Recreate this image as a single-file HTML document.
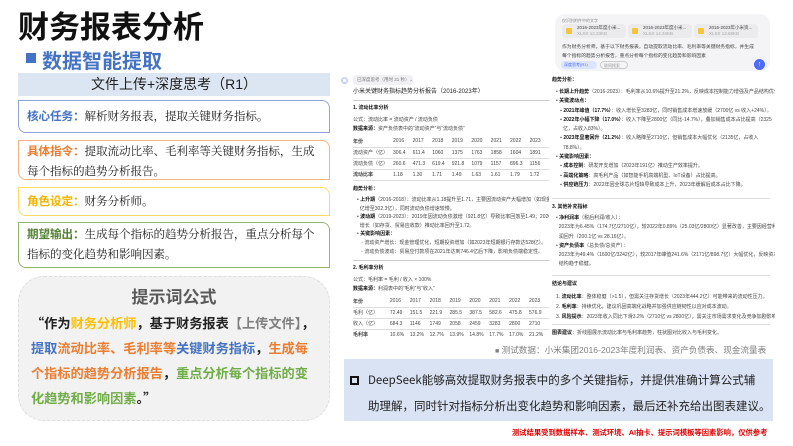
<!DOCTYPE html>
<html><head><meta charset="utf-8"><style>
*{margin:0;padding:0;box-sizing:border-box}
body{width:793px;height:446px;overflow:hidden;background:#fff;font-family:"Liberation Sans","Noto Sans CJK SC",sans-serif;position:relative}
.a{position:absolute}
.box{position:absolute;left:18px;width:312px;border:1.5px solid;border-radius:0 8px 0 8px;font-size:11.6px;line-height:20px;padding:3px 8px;color:#222;font-family:"Noto Serif CJK SC","Noto Sans CJK SC",serif;letter-spacing:-0.1px;white-space:nowrap}
.box b{font-family:"Noto Sans CJK SC",sans-serif}
.s{font-size:5px;color:#444;line-height:9px;white-space:nowrap}
.s b{color:#111}
table.t{border-collapse:collapse;font-size:5px;color:#444;white-space:nowrap}
table.t td{padding:0 5px 0 0;height:11px;border-bottom:0.5px solid #ddd;width:20px}
table.t td:first-child{width:38px}
.clip{position:absolute;overflow:hidden}
</style></head><body>
<div class="a" style="left:18px;top:2px;font-size:31px;font-weight:bold;color:#111;font-family:'Noto Sans CJK SC',sans-serif">财务报表分析</div>
<div class="a" style="left:26px;top:53px;width:10px;height:10px;background:#4472c4"></div>
<div class="a" style="left:42px;top:45px;font-size:20px;font-weight:bold;color:#4472c4;font-family:'Noto Sans CJK SC',sans-serif">数据智能提取</div>
<div class="a" style="left:18px;top:73px;width:312px;height:23px;background:#dce6f2;text-align:center;font-size:14px;line-height:23px;color:#222">文件上传+深度思考（R1）</div>
<div class="box" style="top:100px;height:33px;border-color:#8fa3d8;padding-top:5px"><b style="color:#4472c4">核心任务：</b>解析财务报表，提取关键财务指标。</div>
<div class="box" style="top:140px;height:40px;border-color:#f4b183;padding-top:0px"><b style="color:#ed7d31">具体指令：</b>提取流动比率、毛利率等关键财务指标，生成<br>每个指标的趋势分析报告。</div>
<div class="box" style="top:187px;height:29px;border-color:#ffd966;padding-top:3px"><b style="color:#f0b400">角色设定：</b>财务分析师。</div>
<div class="box" style="top:222px;height:46px;border-color:#8fb56a;padding-top:1px"><b style="color:#548235">期望输出：</b>生成每个指标的趋势分析报告，重点分析每个<br>指标的变化趋势和影响因素。</div>
<div class="a" style="left:18px;top:276px;width:312px;height:145px;background:#f2f2f2;border:1px dashed #ddd;border-radius:26px"></div>
<div class="a" style="left:18px;top:283px;width:312px;text-align:center;font-size:17px;font-weight:bold;color:#595959;font-family:'Noto Sans CJK SC',sans-serif">提示词公式</div>
<div class="a" style="left:31px;top:310px;width:300px;font-size:13.2px;line-height:25px;font-weight:bold;font-family:'Noto Sans CJK SC',sans-serif;color:#222;white-space:nowrap">“作为<span style="color:#ffc000">财务分析师</span>，基于财务报表<span style="color:#7f7f7f">【上传文件】</span>，<br><span style="color:#4472c4">提取</span><span style="color:#ed7d31">流动比率、毛利率等</span><span style="color:#4472c4">关键财务指标</span>，<span style="color:#ed7d31">生成每<br>个指标的趋势分析报告</span>，<span style="color:#70ad47">重点分析每个指标的变<br>化趋势和影响因素</span>。”</div>

<!-- left screenshot -->
<div class="clip" style="left:337px;top:72px;width:212px;height:268px;background:#fff">
<div class="a" style="left:4px;top:4px;font-size:7px;color:#4d6bfe;font-weight:bold">◎</div>
<div class="a" style="left:16px;top:3px;width:60px;height:10px;background:#f1f1f3;border-radius:3px;font-size:4.5px;color:#777;line-height:10px;padding-left:4px;white-space:nowrap">已深度思考（用时 21 秒）⌄</div>
<div class="a s" style="left:16px;top:16px;font-size:6px;color:#222">小米关键财务指标趋势分析报告（2016-2023年）</div>
<div class="a" style="left:16px;top:28px;width:196px;border-top:1px solid #ccc"></div>
<div class="a s" style="left:16px;top:32px"><b>1. 流动比率分析</b></div>
<div class="a s" style="left:16px;top:44px">公式：流动比率 = 流动资产 / 流动负债<br><b>数据来源：</b>资产负债表中的“流动资产”与“流动负债”</div>
<table class="t a" style="left:16px;top:64px"><tr><td><b>年份</b></td><td>2016</td><td>2017</td><td>2018</td><td>2019</td><td>2020</td><td>2021</td><td>2022</td><td>2023</td></tr>
<tr><td>流动资产（亿）</td><td>306.4</td><td>611.4</td><td>1060</td><td>1375</td><td>1763</td><td>1858</td><td>1604</td><td>1891</td></tr>
<tr><td>流动负债（亿）</td><td>260.6</td><td>471.3</td><td>619.4</td><td>921.8</td><td>1079</td><td>1157</td><td>896.3</td><td>1156</td></tr>
<tr><td><b>流动比率</b></td><td>1.18</td><td>1.30</td><td>1.71</td><td>1.49</td><td>1.63</td><td>1.61</td><td>1.79</td><td>1.72</td></tr></table>
<div class="a s" style="left:16px;top:113px"><b>趋势分析：</b></div>
<div class="a s" style="left:20px;top:124px;line-height:8.6px">• <b>上升期</b>（2016-2018）：流动比率从1.18提升至1.71，主要因流动资产大幅增加（如现金及等价物从<br>&nbsp;&nbsp;亿增至302.3亿），同时流动负债增速较慢。<br>• <b>波动期</b>（2019-2023）：2019年因流动负债激增（921.8亿）导致比率回落至1.49；2020年后流动<br>&nbsp;&nbsp;增长（如存货、贸易应收款）推动比率回升至1.72。<br>• <b>关键影响因素：</b><br>&nbsp;&nbsp;&nbsp;◦ 流动资产增长：现金管理优化，短期投资增加（如2023年短期银行存款达528亿）。<br>&nbsp;&nbsp;&nbsp;◦ 流动负债波动：贸易应付款项在2021年达到746.4亿后下降，影响负债端稳定性。</div>
<div class="a" style="left:16px;top:188px;width:196px;border-top:1px solid #ccc"></div>
<div class="a s" style="left:16px;top:192px"><b>2. 毛利率分析</b></div>
<div class="a s" style="left:16px;top:204px">公式：毛利率 = 毛利 / 收入 × 100%<br><b>数据来源：</b>利润表中的“毛利”与“收入”</div>
<table class="t a" style="left:16px;top:224px"><tr><td><b>年份</b></td><td>2016</td><td>2017</td><td>2018</td><td>2019</td><td>2020</td><td>2021</td><td>2022</td><td>2023</td></tr>
<tr><td>毛利（亿）</td><td>72.49</td><td>151.5</td><td>221.9</td><td>285.5</td><td>387.5</td><td>582.6</td><td>475.8</td><td>576.9</td></tr>
<tr><td>收入（亿）</td><td>684.3</td><td>1146</td><td>1749</td><td>2058</td><td>2459</td><td>3283</td><td>2800</td><td>2710</td></tr>
<tr><td><b>毛利率</b></td><td>10.6%</td><td>13.2%</td><td>12.7%</td><td>13.9%</td><td>14.8%</td><td>17.7%</td><td>17.0%</td><td>21.2%</td></tr></table>
</div>

<!-- right chat box -->
<div class="a" style="left:555px;top:14px;width:215px;height:57px;background:#f4f4f6;border-radius:10px"></div>
<div class="a s" style="left:562px;top:16px;font-size:4px;color:#888">仅识别附件中的文字</div>
<div class="a" style="left:562px;top:24px;width:64px;height:14px;background:#ebebee;border-radius:4px"></div>
<div class="a" style="left:628px;top:24px;width:64px;height:14px;background:#ebebee;border-radius:4px"></div>
<div class="a" style="left:694px;top:24px;width:64px;height:14px;background:#ebebee;border-radius:4px"></div>
<div class="a" style="left:566px;top:28px;width:6px;height:6px;background:#f5c542;border-radius:1px"></div>
<div class="a" style="left:632px;top:28px;width:6px;height:6px;background:#f5c542;border-radius:1px"></div>
<div class="a" style="left:698px;top:28px;width:6px;height:6px;background:#f5c542;border-radius:1px"></div>
<div class="a s" style="left:577px;top:25px;font-size:4.5px;line-height:6px">2016-2023年度小米...<br><span style="color:#aaa">XLSX 12.23KB</span></div>
<div class="a s" style="left:643px;top:25px;font-size:4.5px;line-height:6px">2016-2023年度小米...<br><span style="color:#aaa">XLSX 14.34KB</span></div>
<div class="a s" style="left:709px;top:25px;font-size:4.5px;line-height:6px">2016-2023年小米资...<br><span style="color:#aaa">XLSX 13.68KB</span></div>
<div class="a s" style="left:562px;top:43px;font-size:4.8px;line-height:9px">作为财务分析师，基于以下财务报表，自动提取流动比率、毛利率等关键财务指标，并生成<br>每个指标的趋势分析报告，重点分析每个指标的变化趋势和影响因素</div>
<div class="a" style="left:561px;top:61px;width:36px;height:8px;background:#dbe6fe;border-radius:4px;font-size:4px;color:#4d6bfe;line-height:8px;padding-left:3px;white-space:nowrap">深度思考(R1)</div>
<div class="a" style="left:600px;top:61px;width:28px;height:8px;border:0.5px solid #ccc;border-radius:4px;font-size:4px;color:#999;line-height:7px;padding-left:3px;white-space:nowrap">联网搜索</div>
<div class="a" style="left:754px;top:59px;width:11px;height:11px;background:#4d6bfe;border-radius:50%;color:#fff;font-size:7px;text-align:center;line-height:11px">↑</div>

<div class="clip" style="left:550px;top:72px;width:225px;height:268px">
<div class="a s" style="left:2px;top:4px"><b>趋势分析：</b></div>
<div class="a s" style="left:6px;top:16px;line-height:9.3px">• <b>长期上升趋势</b>（2016-2023）：毛利率从10.6%提升至21.2%，反映成本控制能力增强及产品结构优化。<br>• <b>关键波动点：</b><br>&nbsp;&nbsp;&nbsp;▪ <b>2021年峰值（17.7%）</b>：收入增长至3283亿，同时销售成本增速放缓（2700亿 vs 收入+24%）。<br>&nbsp;&nbsp;&nbsp;▪ <b>2022年小幅下降（17.0%）</b>：收入下降至2800亿（同比-14.7%），叠加销售成本占比提高（2325<br>&nbsp;&nbsp;&nbsp;&nbsp;&nbsp;亿，占收入83%）。<br>&nbsp;&nbsp;&nbsp;▪ <b>2023年显著回升（21.2%）</b>：收入略降至2710亿，但销售成本大幅优化（2135亿，占收入<br>&nbsp;&nbsp;&nbsp;&nbsp;&nbsp;78.8%）。<br>• <b>关键影响因素：</b><br>&nbsp;&nbsp;&nbsp;▪ <b>成本控制</b>：研发开支增加（2023年191亿）推动生产效率提升。<br>&nbsp;&nbsp;&nbsp;▪ <b>高端化策略</b>：高毛利产品（如智能手机高端机型、IoT设备）占比提高。<br>&nbsp;&nbsp;&nbsp;▪ <b>供应链压力</b>：2022年因全球芯片短缺导致成本上升，2023年缓解后成本占比下降。</div>
<div class="a" style="left:2px;top:126px;width:218px;border-top:1px solid #ddd"></div>
<div class="a s" style="left:2px;top:131px"><b>3. 其他补充指标</b></div>
<div class="a s" style="left:6px;top:142px;line-height:9.3px">• <b>净利润率</b>（税后利润/收入）：<br>&nbsp;&nbsp;2023年为6.45%（174.7亿/2710亿），较2022年0.89%（25.03亿/2800亿）显著改善，主要因经营利<br>&nbsp;&nbsp;润回升（200.1亿 vs 28.16亿）。<br>• <b>资产负债率</b>（总负债/总资产）：<br>&nbsp;&nbsp;2023年为49.4%（1600亿/3242亿），较2017年峰值241.6%（2171亿/898.7亿）大幅优化，反映资本<br>&nbsp;&nbsp;结构趋于稳健。</div>
<div class="a" style="left:2px;top:203px;width:218px;border-top:1px solid #ddd"></div>
<div class="a s" style="left:2px;top:208px"><b>结论与建议</b></div>
<div class="a s" style="left:6px;top:220px;line-height:10px">1. <b>流动比率</b>：整体稳健（>1.5），但需关注存货增长（2023年444.2亿）可能带来的流动性压力。<br>2. <b>毛利率</b>：持续优化，建议巩固高端化战略并加强供应链韧性以应对成本波动。<br>3. <b>风险提示</b>：2023年收入同比下滑3.2%（2710亿 vs 2800亿），需关注市场需求变化及竞争加剧影响。</div>
<div class="a" style="left:2px;top:252px;width:218px;border-top:1px solid #ddd"></div>
<div class="a s" style="left:2px;top:257px"><b>图表建议</b>：折线图展示流动比率与毛利率趋势，柱状图对比收入与毛利变化。</div>
</div>

<div class="a" style="left:495px;top:344px;font-size:8.6px;color:#7f7f7f;white-space:nowrap"><span style="font-size:7px">■</span> 测试数据：小米集团2016-2023年度利润表、资产负债表、现金流量表</div>
<div class="a" style="left:344px;top:359px;width:429px;height:62px;background:#dae3f3"></div>
<div class="a" style="left:350px;top:376px;width:9px;height:9px;border:2px solid #111"></div>
<div class="a" style="left:368px;top:367px;width:402px;font-size:11.5px;line-height:26px;color:#222;font-family:'Noto Sans CJK SC',sans-serif;white-space:nowrap">DeepSeek能够高效提取财务报表中的多个关键指标，并提供准确计算公式辅<br>助理解，同时针对指标分析出变化趋势和影响因素，最后还补充给出图表建议。</div>
<div class="a" style="left:512px;top:428px;font-size:7.3px;color:#e00000;font-weight:bold;white-space:nowrap">测试结果受到数据样本、测试环境、AI抽卡、提示词模板等因素影响，仅供参考</div>
</body></html>
